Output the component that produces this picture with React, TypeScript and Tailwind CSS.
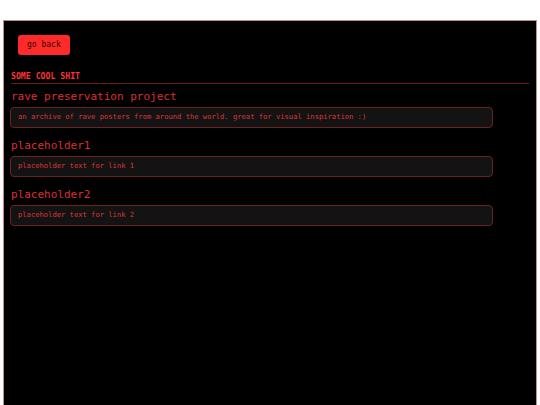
const links = [
  {
    title: "rave preservation project",
    blurb: "an archive of rave posters from around the world. great for visual inspiration :)",
  },
  { title: "placeholder1", blurb: "placeholder text for link 1" },
  { title: "placeholder2", blurb: "placeholder text for link 2" },
];

export default function App() {
  return (
    <div className="min-h-screen bg-white pt-[20px] pl-[3px] pr-[3px] font-['DejaVu_Sans_Mono',monospace]">
      <main className="h-[385px] w-[534px] border border-[#c98a8a] border-b-0 bg-black px-[6px]">
        <div className="pt-[9px] pl-[8px]">
          <button className="h-[20px] rounded-[3px] bg-[#ff2b2b] px-[9px] text-[8px] leading-none text-[#3a0000]">
            go back
          </button>
        </div>

        <h2 className="mt-[16px] pl-[1px] text-[8.2px] font-bold leading-[10px] text-[#ff3333]">SOME COOL SHIT</h2>
        <div className="mt-[2px] ml-[1px] mr-[1px] h-px bg-[#6a1c1c]" />

        <div className="flex flex-col">
          {links.map((l) => (
            <div key={l.title} className="mt-[5px] mb-[5px]">
              <h3 className="pl-[1px] text-[11px] leading-[16px] text-[#dd2e33]">{l.title}</h3>
              <div className="mt-[2px] flex h-[21px] w-[483px] items-center rounded-[4px] border border-[#6b2222] bg-[#131313] px-[7px] text-[7.15px] text-[#dc3535]">
                {l.blurb}
              </div>
            </div>
          ))}
        </div>
      </main>
    </div>
  );
}
